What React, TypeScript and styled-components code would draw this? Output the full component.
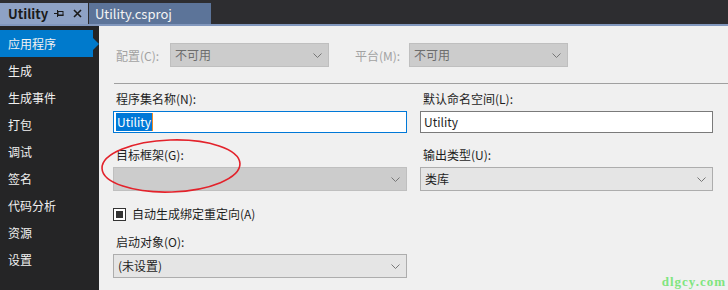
import React from 'react';
import styled, { createGlobalStyle } from 'styled-components';

const Global = createGlobalStyle`
  html, body { margin: 0; padding: 0; background: #252526; }
  body { font-family: "Noto Sans CJK SC", "Noto Sans", sans-serif; font-size: 12px; }
  * { box-sizing: border-box; }
`;

const Window = styled.div`
  position: relative;
  width: 728px;
  height: 290px;
  display: flex;
  flex-direction: column;
  overflow: hidden;
  background: #2d2d30;
`;

const TabBar = styled.div`
  height: 24px;
  display: flex;
  align-items: flex-end;
  gap: 1px;
  background: #2d2d30;
`;

const Tab = styled.div<{ $active?: boolean; $w: number }>`
  width: ${p => p.$w}px;
  height: 21px;
  display: flex;
  align-items: center;
  padding: 0 0 0 ${p => (p.$active ? 8 : 6)}px;
  background: ${p => (p.$active ? '#8ea2c5' : '#5c7499')};
  color: ${p => (p.$active ? '#1a1a1a' : '#f4f4f4')};
  font-weight: ${p => (p.$active ? 700 : 400)};
  font-size: 13px;
  line-height: 21px;
`;

const TabTitle = styled.span`
  flex: 1;
`;

const TabIcons = styled.span`
  display: flex;
  align-items: center;
  gap: 9px;
  margin-right: 6px;
`;

const Strip = styled.div`
  height: 2px;
  background: #8197bd;
`;

const Body = styled.div`
  flex: 1;
  display: flex;
`;

const Sidebar = styled.nav`
  width: 99px;
  background: #252526;
  padding-top: 4px;
  display: flex;
  flex-direction: column;
`;

const NavItem = styled.div<{ $active?: boolean }>`
  position: relative;
  width: 93px;
  height: 27px;
  line-height: 27px;
  padding-left: 8px;
  color: #f1f1f1;
  font-size: 12px;
  background: ${p => (p.$active ? '#007acc' : 'transparent')};
  ${p =>
    p.$active &&
    `&::after {
      content: '';
      position: absolute;
      right: -6px;
      top: 50%;
      margin-top: -6px;
      border-left: 6px solid #007acc;
      border-top: 6px solid transparent;
      border-bottom: 6px solid transparent;
    }`}
`;

const Content = styled.main`
  flex: 1;
  background: #f0f0f0;
  padding: 17px 15px 0 14px;
  color: #1e1e1e;
`;

const TopRow = styled.div`
  display: flex;
  align-items: center;
  height: 24px;
`;

const TopLabel = styled.span<{ $first?: boolean }>`
  width: 57px;
  padding-left: 3px;
  margin-left: ${p => (p.$first ? 0 : 23)}px;
  color: #a2a2a2;
`;

const Select = styled.div<{ $disabled?: boolean; $w?: number; $h?: number }>`
  width: ${p => (p.$w ? `${p.$w}px` : '100%')};
  height: ${p => p.$h ?? 24}px;
  display: flex;
  align-items: center;
  justify-content: space-between;
  padding: 0 6px 0 4px;
  background: ${p => (p.$disabled ? '#cccccc' : '#e5e5e5')};
  border: 1px solid ${p => (p.$disabled ? '#bfbfbf' : '#adadad')};
  color: ${p => (p.$disabled ? '#6d6d6d' : '#1e1e1e')};
  line-height: 20px;
`;

const Separator = styled.div`
  height: 1px;
  background: #a0a0a0;
  margin: 16px -15px 0 1px;
`;

const Grid = styled.div`
  display: grid;
  grid-template-columns: 294px 293px;
  column-gap: 13px;
  margin-top: 6px;
`;

const Field = styled.div<{ $mt?: number; $col?: number }>`
  display: flex;
  flex-direction: column;
  margin-top: ${p => p.$mt ?? 0}px;
  grid-column: ${p => p.$col ?? 'auto'};
`;

const FieldLabel = styled.label`
  height: 18px;
  line-height: 18px;
  padding-left: 3px;
  margin-bottom: 3px;
  color: #1e1e1e;
`;

const TextBox = styled.div<{ $focused?: boolean }>`
  height: 22px;
  display: flex;
  align-items: center;
  padding-left: ${p => (p.$focused ? 2 : 3)}px;
  background: #ffffff;
  border: 1px solid ${p => (p.$focused ? '#0078d7' : '#7a7a7a')};
  color: #1e1e1e;
  line-height: 18px;
`;

const Selected = styled.span`
  height: 18px;
  line-height: 18px;
  padding: 0 1px;
  background: #0078d7;
  color: #ffffff;
  border-right: 1px solid #f08a24;
`;

const CheckRow = styled.div`
  grid-column: 1;
  display: flex;
  align-items: center;
  height: 14px;
  margin-top: 16px;
`;

const CheckBox = styled.span`
  width: 13px;
  height: 13px;
  border: 1px solid #333333;
  background: #ffffff;
  display: flex;
  align-items: center;
  justify-content: center;
  &::before {
    content: '';
    width: 7px;
    height: 7px;
    background: #333333;
  }
`;

const CheckLabel = styled.span`
  margin-left: 6px;
  line-height: 14px;
`;

const Ellipse = styled.svg`
  position: absolute;
  left: 100px;
  top: 138px;
  pointer-events: none;
`;

const Watermark = styled.span`
  position: absolute;
  right: 2px;
  bottom: 1px;
  font-family: "Liberation Serif", serif;
  font-weight: 700;
  font-size: 13px;
  letter-spacing: 1px;
  color: #7fe57f;
  line-height: 14px;
`;

const Chevron = () => (
  <svg width="9" height="5" viewBox="0 0 9 5">
    <polyline points="0.5,0.5 4.5,4.5 8.5,0.5" fill="none" stroke="#777" strokeWidth="1" />
  </svg>
);

const Pin = () => (
  <svg width="10" height="9" viewBox="0 0 10 9">
    <line x1="0" y1="4.5" x2="3" y2="4.5" stroke="#1a1a1a" strokeWidth="1" />
    <line x1="3.5" y1="1" x2="3.5" y2="8" stroke="#1a1a1a" strokeWidth="1" />
    <rect x="4" y="2.5" width="5" height="4" fill="none" stroke="#1a1a1a" strokeWidth="1" />
    <line x1="4" y1="6" x2="9.5" y2="6" stroke="#1a1a1a" strokeWidth="1" />
  </svg>
);

const Close = () => (
  <svg width="9" height="9" viewBox="0 0 9 9">
    <path d="M1 1 L8 8 M8 1 L1 8" stroke="#1a1a1a" strokeWidth="1.6" />
  </svg>
);

const navItems = ['应用程序', '生成', '生成事件', '打包', '调试', '签名', '代码分析', '资源', '设置'];

export default function App() {
  return (
    <Window>
      <Global />
      <TabBar>
        <Tab $active $w={88}>
          <TabTitle>Utility</TabTitle>
          <TabIcons>
            <Pin />
            <Close />
          </TabIcons>
        </Tab>
        <Tab $w={122}>
          <TabTitle>Utility.csproj</TabTitle>
        </Tab>
      </TabBar>
      <Strip />
      <Body>
        <Sidebar>
          {navItems.map((n, i) => (
            <NavItem key={n} $active={i === 0}>
              {n}
            </NavItem>
          ))}
        </Sidebar>
        <Content>
          <TopRow>
            <TopLabel $first>配置(C):</TopLabel>
            <Select $disabled $w={159}>
              <span>不可用</span>
              <Chevron />
            </Select>
            <TopLabel>平台(M):</TopLabel>
            <Select $disabled $w={159}>
              <span>不可用</span>
              <Chevron />
            </Select>
          </TopRow>
          <Separator />
          <Grid>
            <Field>
              <FieldLabel>程序集名称(N):</FieldLabel>
              <TextBox $focused>
                <Selected>Utility</Selected>
              </TextBox>
            </Field>
            <Field>
              <FieldLabel>默认命名空间(L):</FieldLabel>
              <TextBox>Utility</TextBox>
            </Field>
            <Field $mt={13}>
              <FieldLabel>目标框架(G):</FieldLabel>
              <Select $disabled>
                <span />
                <Chevron />
              </Select>
            </Field>
            <Field $mt={13}>
              <FieldLabel>输出类型(U):</FieldLabel>
              <Select>
                <span>类库</span>
                <Chevron />
              </Select>
            </Field>
            <CheckRow>
              <CheckBox />
              <CheckLabel>自动生成绑定重定向(A)</CheckLabel>
            </CheckRow>
            <Field $mt={12} $col={1}>
              <FieldLabel>启动对象(O):</FieldLabel>
              <Select>
                <span>(未设置)</span>
                <Chevron />
              </Select>
            </Field>
          </Grid>
        </Content>
      </Body>
      <Ellipse width="142" height="56" viewBox="0 0 142 56">
        <ellipse cx="71" cy="28" rx="69" ry="26" fill="none" stroke="#e3222b" strokeWidth="1.6" transform="rotate(-2 71 28)" />
      </Ellipse>
      <Watermark>dlgcy.com</Watermark>
    </Window>
  );
}
